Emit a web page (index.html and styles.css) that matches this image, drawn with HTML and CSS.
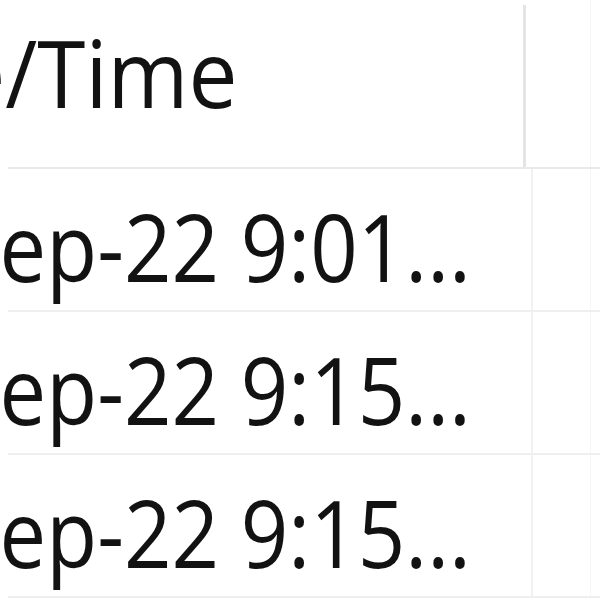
FILE: index.html
```html
<!DOCTYPE html>
<html>
<head>
<meta charset="utf-8">
<link rel="stylesheet" href="styles.css">
</head>
<body>
<div class="grid">
  <div class="head">
    <div class="hcell"><span class="htext">Date/Time</span></div>
    <div class="hcell2"></div>
  </div>
  <div class="row">
    <div class="cell"><span class="ctext">Sep-22 9:01...</span></div>
    <div class="cell2"></div>
  </div>
  <div class="row">
    <div class="cell"><span class="ctext">Sep-22 9:15...</span></div>
    <div class="cell2"></div>
  </div>
  <div class="row">
    <div class="cell"><span class="ctext">Sep-22 9:15...</span></div>
    <div class="cell2"></div>
  </div>
</div>
</body>
</html>
```
FILE: styles.css
```css
html, body {
  margin: 0;
  padding: 0;
  width: 600px;
  height: 600px;
  overflow: hidden;
  background: #fff;
}
.grid {
  font-family: "Open Sans", "Noto Sans", sans-serif;
  color: #121212;
}
.head {
  display: flex;
  box-sizing: border-box;
  height: 169px;
  border-bottom: 2px solid #e9e9e9;
  margin-left: 8px;
}
.hcell {
  box-sizing: border-box;
  width: 526px;
  margin-left: -8px;
  overflow: hidden;
  white-space: nowrap;
  border-right: 3px solid #e4e4e4;
  margin-top: 5px;
  padding-top: 20px;
}
.htext {
  display: block;
  font-size: 94px;
  line-height: 94px;
  margin-left: -187px;
  transform: scaleX(0.93);
  transform-origin: left center;
}
.hcell2 {
  flex: 1;
  border-right: 1px solid #f6f6f6;
  margin-right: 9px;
}
.row {
  display: flex;
  box-sizing: border-box;
  height: 143px;
  border-bottom: 2px solid #efefef;
  margin-left: 8px;
}
.cell {
  box-sizing: border-box;
  width: 533px;
  margin-left: -8px;
  overflow: hidden;
  white-space: nowrap;
  border-right: 2px solid #f1f1f1;
  padding-top: 30px;
}
.ctext {
  display: block;
  font-size: 94px;
  line-height: 94px;
  margin-left: -46px;
  transform: scaleX(0.885);
  transform-origin: left center;
}
.cell2 {
  flex: 1;
  border-right: 1px solid #f6f6f6;
  margin-right: 9px;
}
```
